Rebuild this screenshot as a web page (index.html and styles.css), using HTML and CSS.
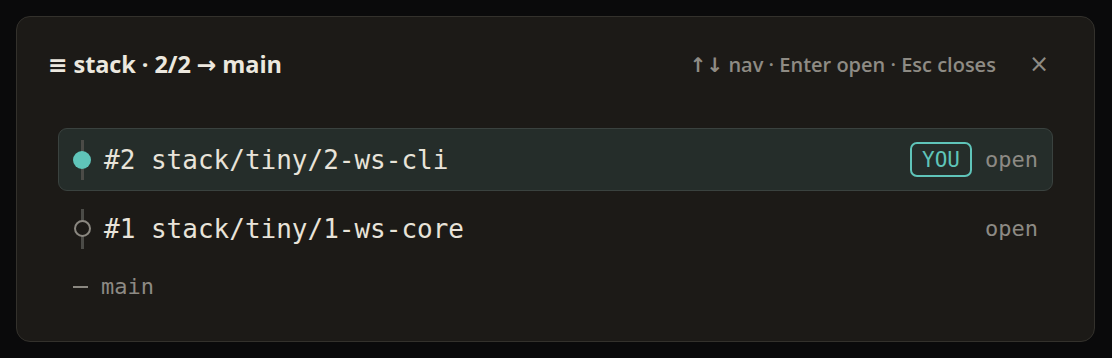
FILE: index.html
```html
<!DOCTYPE html>
<html>
<head>
<meta charset="utf-8">
<link rel="stylesheet" href="styles.css">
</head>
<body>
<div class="panel">
  <div class="header">
    <div class="title"><span class="sym">≡</span> stack · 2/2 <span class="sym">→</span> main</div>
    <div class="right">
      <span class="hint"><span class="sym">↑↓</span> nav · Enter open · Esc closes</span>
      <span class="close">×</span>
    </div>
  </div>
  <div class="list">
    <div class="row selected">
      <div class="gutter"><span class="line"></span><span class="dot filled"></span></div>
      <div class="name">#2 stack/tiny/2-ws-cli</div>
      <span class="badge">YOU</span>
      <span class="state">open</span>
    </div>
    <div class="row">
      <div class="gutter"><span class="line"></span><span class="dot hollow"></span></div>
      <div class="name">#1 stack/tiny/1-ws-core</div>
      <span class="state">open</span>
    </div>
    <div class="base">
      <span class="dash"></span>
      <span class="basename">main</span>
    </div>
  </div>
</div>
</body>
</html>
```
FILE: styles.css
```css
* { box-sizing: border-box; }
html, body { margin: 0; }
body {
  background: #0a0a0b;
  padding: 16px 17px 16px 16px;
  width: 1112px;
  height: 358px;
}
.panel {
  background: #1c1a17;
  border: 1px solid #33312c;
  border-radius: 14px;
  height: 326px;
  padding: 32px 41px 0 34px;
}
.header {
  display: flex;
  align-items: center;
  justify-content: space-between;
  height: 30px;
  padding-right: 4px;
}
.title {
  font-family: "Open Sans", "Noto Sans", sans-serif;
  font-weight: 700;
  font-size: 23.5px;
  color: #ece8df;
  letter-spacing: -0.1px;
  margin-left: -3px;
}
.sym {
  font-family: "DejaVu Sans", sans-serif;
}
.right {
  display: flex;
  align-items: center;
  gap: 33px;
}
.hint {
  font-family: "Open Sans", "Noto Sans", sans-serif;
  font-weight: 600;
  font-size: 20px;
  color: #8e8b84;
}
.close {
  font-family: "DejaVu Sans", sans-serif;
  font-size: 24px;
  color: #8e8b84;
  line-height: 1;
}
.list {
  margin: 49px 0 0 7px;
  display: flex;
  flex-direction: column;
  gap: 6px;
}
.row {
  display: flex;
  align-items: center;
  height: 63px;
  border: 1px solid transparent;
  border-radius: 9px;
  padding: 0 14px 0 14px;
}
.row.selected {
  background: #252d2a;
  border-color: #3a423f;
}
.gutter {
  position: relative;
  width: 18px;
  height: 40px;
  display: flex;
  align-items: center;
  justify-content: center;
  margin-right: 13px;
}
.line {
  position: absolute;
  left: 8px;
  top: 0;
  width: 3px;
  height: 40px;
  background: #4b4b47;
}
.dot {
  position: relative;
  border-radius: 50%;
}
.dot.filled {
  width: 18px;
  height: 18px;
  background: #5fc4b9;
}
.dot.hollow {
  width: 17px;
  height: 17px;
  border: 2px solid #8a8780;
  background: #1c1a17;
}
.name {
  flex: 1;
  font-family: "DejaVu Sans Mono", monospace;
  font-size: 26px;
  color: #e8e3d9;
}
.badge {
  font-family: "DejaVu Sans Mono", monospace;
  font-size: 21px;
  color: #5fc4b9;
  border: 2px solid #5fc4b9;
  border-radius: 7px;
  width: 62px;
  height: 35px;
  display: flex;
  align-items: center;
  justify-content: center;
  margin-right: 13px;
}
.state {
  font-family: "DejaVu Sans Mono", monospace;
  font-size: 22px;
  color: #8d8a84;
}
.base {
  display: flex;
  align-items: center;
  height: 41px;
  padding-left: 15px;
}
.dash {
  width: 15px;
  height: 2px;
  background: #8a8780;
  margin-right: 13px;
}
.basename {
  font-family: "DejaVu Sans Mono", monospace;
  font-size: 22px;
  color: #8d8a84;
}
```
